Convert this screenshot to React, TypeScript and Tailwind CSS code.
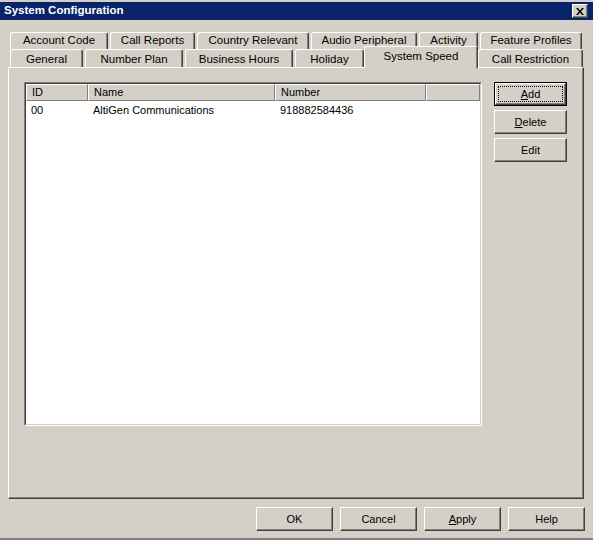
import React from "react";

const bevel =
  "border border-t-white border-l-white border-b-[#404040] border-r-[#404040] shadow-[inset_-1px_-1px_0_#808080] bg-[#d4d0c8]";

function Tab({ label, className }: { label: string; className: string }) {
  return (
    <div
      className={
        "flex items-center justify-center text-[11.5px] border-t border-l border-r border-t-white border-l-white border-r-[#404040] rounded-t-[3px] shadow-[inset_-1px_0_0_#808080] bg-[#d4d0c8] whitespace-nowrap " +
        className
      }
    >
      {label}
    </div>
  );
}

function Btn({ children, className }: { children: React.ReactNode; className: string }) {
  return <div className={"flex items-center justify-center " + bevel + " " + className}>{children}</div>;
}

export default function App() {
  return (
    <div className="w-[593px] h-[540px] bg-[#d4d0c8] flex flex-col pt-[2px] border-b-2 border-[#808080] text-black text-[11px] font-['Liberation_Sans',Arial,sans-serif] leading-none">
      {/* title bar */}
      <div className="h-[18px] bg-[#0a246a] flex items-center justify-between pl-[4px] pr-[5px]">
        <span className="text-white font-bold text-[11.5px]">System Configuration</span>
        <div className={"w-[16px] h-[14px] flex items-center justify-center " + bevel}>
          <svg width="8" height="7" viewBox="0 0 8 7">
            <path d="M0 0 L2 0 L4 2.5 L6 0 L8 0 L5 3.5 L8 7 L6 7 L4 4.5 L2 7 L0 7 L3 3.5 Z" fill="#000" />
          </svg>
        </div>
      </div>

      {/* tabs */}
      <div className="mt-[12px] pl-[10px] flex flex-col">
        <div className="flex gap-[2px] h-[17px]">
          <Tab label="Account Code" className="w-[98px] h-[17px]" />
          <Tab label="Call Reports" className="w-[85px] h-[17px]" />
          <Tab label="Country Relevant" className="w-[112px] h-[17px]" />
          <Tab label="Audio Peripheral" className="w-[106px] h-[17px]" />
          <Tab label="Activity" className="w-[59px] h-[17px]" />
          <Tab label="Feature Profiles" className="w-[102px] h-[17px]" />
        </div>
        <div className="flex items-end h-[18px]">
          <Tab label="General" className="w-[73px] h-[18px] pt-[2px] mr-[2px]" />
          <Tab label="Number Plan" className="w-[98px] h-[18px] pt-[2px] mr-[2px]" />
          <Tab label="Business Hours" className="w-[108px] h-[18px] pt-[2px] mr-[2px]" />
          <Tab label="Holiday" className="w-[69px] h-[18px] pt-[2px]" />
          <Tab label="System Speed" className="w-[114px] h-[22px] pb-[2px] relative top-[1px] z-10" />
          <Tab label="Call Restriction" className="w-[105px] h-[18px] pt-[2px]" />
        </div>
      </div>

      {/* panel */}
      <div className="ml-[8px] w-[576px] h-[432px] border border-t-white border-l-white border-r-[#404040] border-b-[#404040] shadow-[inset_-1px_-1px_0_#808080] flex items-start pt-[14px] pl-[15px]">
        <div className="w-[458px] h-[344px] flex border border-t-[#808080] border-l-[#808080] border-b-white border-r-white">
          <div className="flex-1 flex flex-col bg-white border border-t-[#404040] border-l-[#404040] border-b-[#d4d0c8] border-r-[#d4d0c8]">
            <div className="flex h-[17px]">
              <div className="w-[62px] h-[17px] flex items-center pl-[5px] border border-t-white border-l-white border-b-[#808080] border-r-[#808080] bg-[#d4d0c8]">ID</div>
              <div className="w-[187px] h-[17px] flex items-center pl-[5px] border border-t-white border-l-white border-b-[#808080] border-r-[#808080] bg-[#d4d0c8]">Name</div>
              <div className="w-[151px] h-[17px] flex items-center pl-[5px] border border-t-white border-l-white border-b-[#808080] border-r-[#808080] bg-[#d4d0c8]">Number</div>
              <div className="w-[54px] h-[17px] flex items-center pl-[5px] border border-t-white border-l-white border-b-[#808080] border-r-[#808080] bg-[#d4d0c8]"></div>
            </div>
            <div className="flex h-[18px] items-center">
              <div className="w-[62px] pl-[5px]">00</div>
              <div className="w-[187px] pl-[5px]">AltiGen Communications</div>
              <div className="w-[151px] pl-[5px]">918882584436</div>
            </div>
          </div>
        </div>

        <div className="ml-[12px] flex flex-col gap-[4px]">
          <div className="w-[73px] h-[24px] flex border border-black">
            <div className={"relative flex-1 flex items-center justify-center " + bevel}>
              <span className="absolute inset-[2px] border border-dotted border-black" />
              <span>
                <span className="underline">A</span>dd
              </span>
            </div>
          </div>
          <Btn className="w-[73px] h-[24px]">
            <span>
              <span className="underline">D</span>elete
            </span>
          </Btn>
          <Btn className="w-[73px] h-[24px]">Edit</Btn>
        </div>
      </div>

      {/* bottom buttons */}
      <div className="mt-[8px] flex justify-end gap-[7px] pr-[8px]">
        <Btn className="w-[77px] h-[24px]">OK</Btn>
        <Btn className="w-[77px] h-[24px]">Cancel</Btn>
        <Btn className="w-[77px] h-[24px]">
          <span>
            <span className="underline">A</span>pply
          </span>
        </Btn>
        <Btn className="w-[77px] h-[24px]">Help</Btn>
      </div>
    </div>
  );
}
